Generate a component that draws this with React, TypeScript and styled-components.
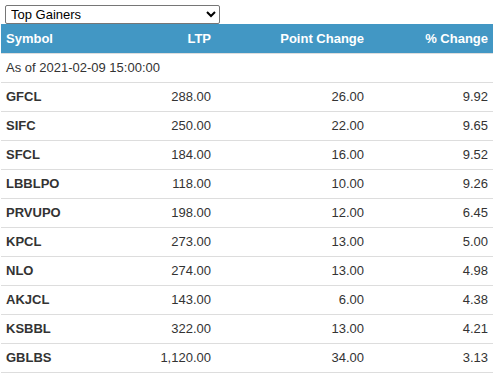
import React, { useState } from "react";
import styled, { createGlobalStyle } from "styled-components";

const GlobalStyle = createGlobalStyle`
	body {
		margin: 0;
		background: #fff;
		font-family: "Liberation Sans", Arial, sans-serif;
	}
`;

const Wrapper = styled.div`
	padding: 5px 6px 0 1px;
	width: 492px;
`;

const Picker = styled.select`
	display: block;
	margin-left: 4px;
	width: 215px;
	height: 19px;
	font-family: "Liberation Sans", Arial, sans-serif;
	font-size: 13px;
	color: #000;
	border: 1px solid #767676;
	border-radius: 2px;
	background: #fff;
	padding: 0 0 0 1px;
`;

const Table = styled.table`
	width: 492px;
	border-collapse: collapse;
	font-size: 13px;
	color: #333;
	table-layout: fixed;
`;

const HeadCell = styled.th<{ $align?: string; $w?: number }>`
	background: #4297c4;
	color: #fff;
	font-weight: 700;
	text-align: ${(p) => p.$align || "left"};
	width: ${(p) => (p.$w ? `${p.$w}px` : "auto")};
	height: 29px;
	padding: 0 5px;
	border-bottom: 1px solid #ddd;
	box-sizing: border-box;
`;

const Cell = styled.td<{ $align?: string; $bold?: boolean }>`
	text-align: ${(p) => p.$align || "left"};
	font-weight: ${(p) => (p.$bold ? 700 : 400)};
	height: 29px;
	padding: 0 5px;
	border-bottom: 1px solid #ddd;
	box-sizing: border-box;
	white-space: nowrap;
`;

const rows = [
	["GFCL", "288.00", "26.00", "9.92"],
	["SIFC", "250.00", "22.00", "9.65"],
	["SFCL", "184.00", "16.00", "9.52"],
	["LBBLPO", "118.00", "10.00", "9.26"],
	["PRVUPO", "198.00", "12.00", "6.45"],
	["KPCL", "273.00", "13.00", "5.00"],
	["NLO", "274.00", "13.00", "4.98"],
	["AKJCL", "143.00", "6.00", "4.38"],
	["KSBBL", "322.00", "13.00", "4.21"],
	["GBLBS", "1,120.00", "34.00", "3.13"],
];

const App = () => {
	const [list, setList] = useState("gainers");
	return (
		<>
			<GlobalStyle />
			<Wrapper>
				<Picker value={list} onChange={(e) => setList(e.target.value)}>
					<option value="gainers">Top Gainers</option>
					<option value="losers">Top Losers</option>
					<option value="turnover">Top Turnover</option>
				</Picker>
				<Table>
					<thead>
						<tr>
							<HeadCell $w={100}>Symbol</HeadCell>
							<HeadCell $w={115} $align="right">
								LTP
							</HeadCell>
							<HeadCell $w={153} $align="right">
								Point Change
							</HeadCell>
							<HeadCell $w={124} $align="right">
								% Change
							</HeadCell>
						</tr>
					</thead>
					<tbody>
						<tr>
							<Cell colSpan={4}>As of 2021-02-09 15:00:00</Cell>
						</tr>
						{rows.map((r) => (
							<tr key={r[0]}>
								<Cell $bold>{r[0]}</Cell>
								<Cell $align="right">{r[1]}</Cell>
								<Cell $align="right">{r[2]}</Cell>
								<Cell $align="right">{r[3]}</Cell>
							</tr>
						))}
					</tbody>
				</Table>
			</Wrapper>
		</>
	);
};

export default App;
